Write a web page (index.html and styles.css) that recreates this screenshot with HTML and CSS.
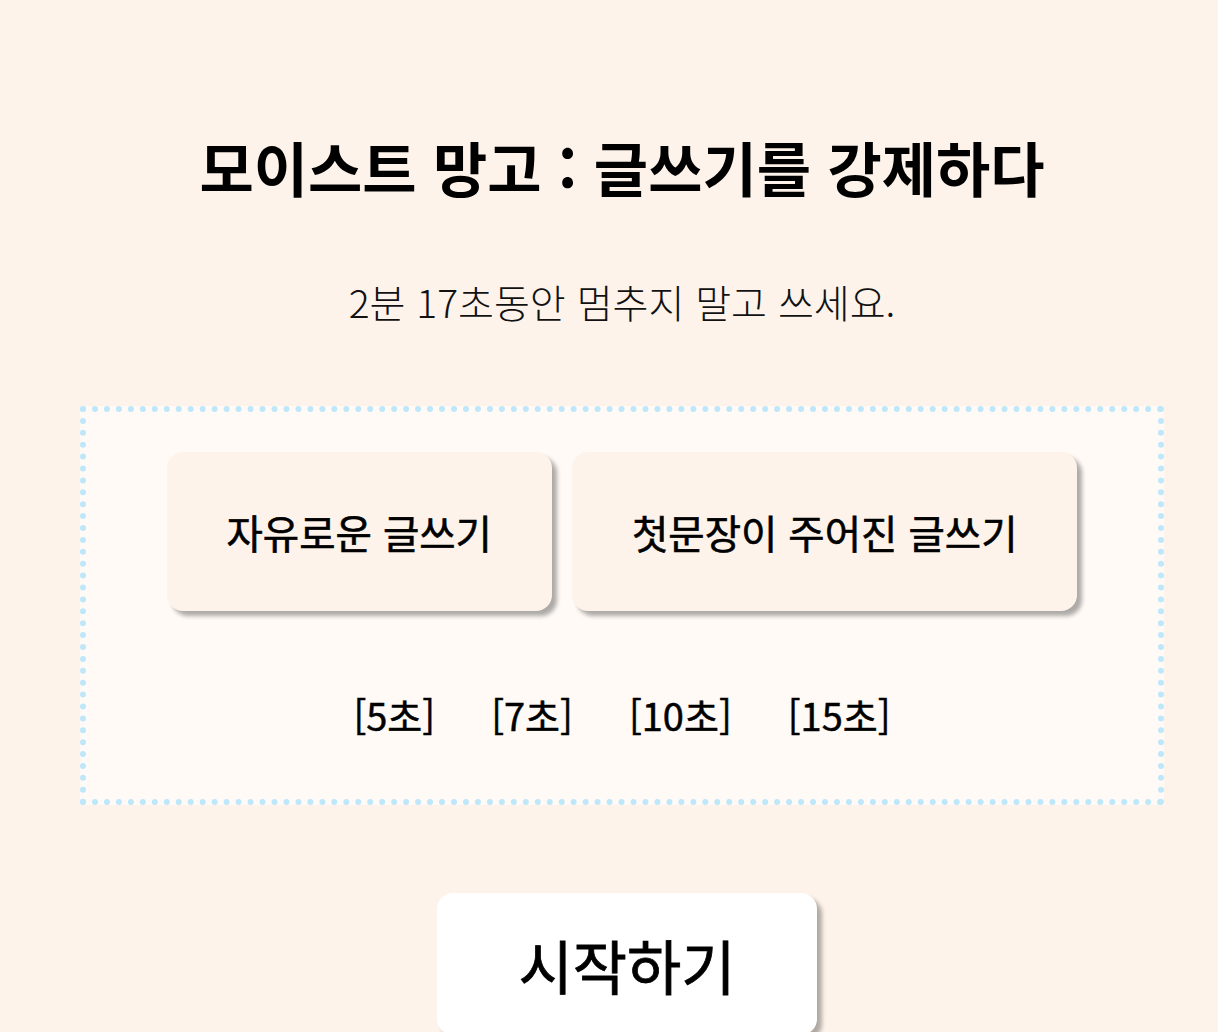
FILE: index.html
```html
<!DOCTYPE html>
<html lang="ko">
<head>
<meta charset="utf-8">
<title>모이스트 망고</title>
<link rel="stylesheet" href="styles.css">
</head>
<body>
<main class="page">
  <h1 class="title">모이스트 망고 : 글쓰기를 강제하다</h1>
  <p class="subtitle">2분 17초동안 멈추지 말고 쓰세요.</p>
  <section class="panel">
    <div class="modes">
      <button class="mode">자유로운 글쓰기</button>
      <button class="mode">첫문장이 주어진 글쓰기</button>
    </div>
    <div class="times">
      <span class="time">[5초]</span>
      <span class="time">[7초]</span>
      <span class="time">[10초]</span>
      <span class="time">[15초]</span>
    </div>
  </section>
  <button class="start">시작하기</button>
</main>
</body>
</html>
```
FILE: styles.css
```css
html, body {
  margin: 0;
  padding: 0;
  background: #fdf3ea;
  overflow: hidden;
}
body {
  font-family: "Noto Sans CJK KR", "Noto Sans", sans-serif;
  color: #000;
}
.page {
  padding-left: 26px;
  display: flex;
  flex-direction: column;
  align-items: center;
}
.title {
  margin: 125px 0 0;
  font-size: 59px;
  line-height: 84px;
  font-weight: 700;
}
.subtitle {
  margin: 64px 0 0;
  font-size: 39px;
  line-height: 56px;
  font-weight: 300;
  color: #111;
}
.panel {
  margin-top: 77px;
  box-sizing: border-box;
  width: 1084px;
  border: 6px dotted #bfe7fa;
  background: #fffaf6;
  padding: 40px 0 57px;
  display: flex;
  flex-direction: column;
  align-items: center;
}
.modes {
  display: flex;
  gap: 20px;
}
.mode {
  height: 159px;
  padding: 0 60px;
  border: none;
  border-radius: 16px;
  background: #fdf3ea;
  box-shadow: 5px 5px 4px rgba(0, 0, 0, 0.32);
  font-family: inherit;
  font-size: 39.5px;
  font-weight: 400;
  -webkit-text-stroke: 0.6px #000;
  color: #000;
}
.times {
  margin-top: 77px;
  display: flex;
  gap: 56px;
  font-size: 38px;
  line-height: 54px;
  font-weight: 400;
  -webkit-text-stroke: 0.5px #000;
}
.start {
  margin: 88px 0 0 10px;
  width: 380px;
  height: 142px;
  border: none;
  border-radius: 16px;
  background: #fff;
  box-shadow: 5px 5px 4px rgba(0, 0, 0, 0.3);
  font-family: inherit;
  font-size: 59px;
  font-weight: 400;
  -webkit-text-stroke: 0.8px #000;
  color: #000;
}
```
